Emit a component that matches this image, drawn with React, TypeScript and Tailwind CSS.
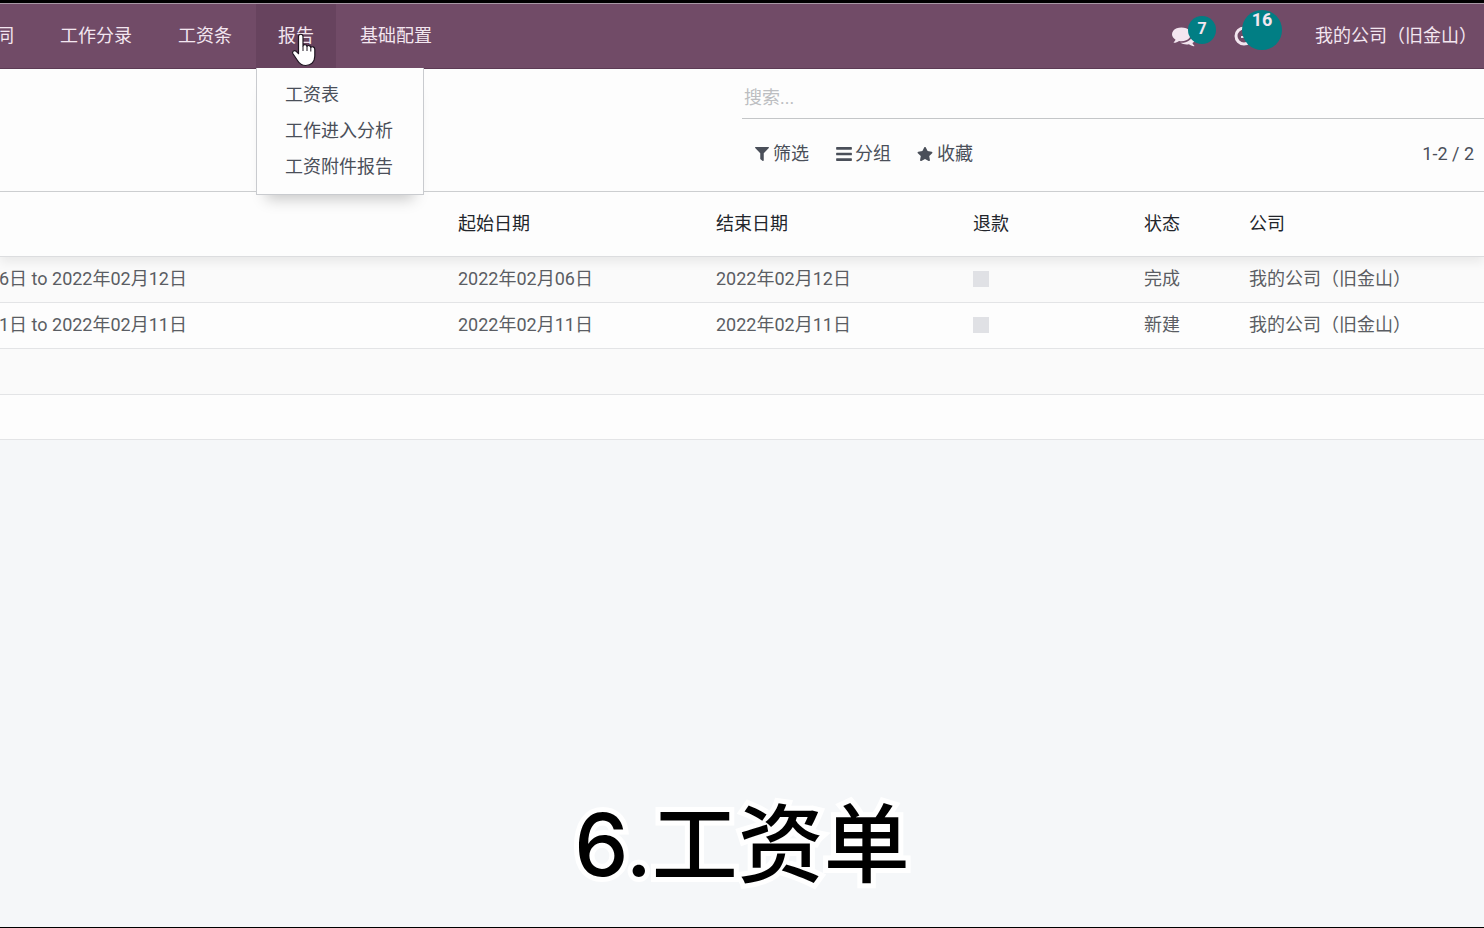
import { FaBars, FaFilter, FaStar } from "react-icons/fa"

const reports = ["工资表", "工作进入分析", "工资附件报告"]

const payslips = [
  {
    name: "6日 to 2022年02月12日",
    start: "2022年02月06日",
    end: "2022年02月12日",
    state: "完成",
    company: "我的公司（旧金山）",
  },
  {
    name: "1日 to 2022年02月11日",
    start: "2022年02月11日",
    end: "2022年02月11日",
    state: "新建",
    company: "我的公司（旧金山）",
  },
]

function CommentsIcon() {
  return (
    <svg viewBox="0 0 1792 1792" className="h-6 w-6 fill-[#f3e6f0]" aria-hidden="true">
      <path d="M1408 768q0 139-94 257t-256.5 186.5-353.5 68.5q-86 0-176-16-124 88-278 128-36 9-86 16h-3q-11 0-20.5-8t-11.5-21q-1-3-1-6.5t.5-6.5 2-6l2.5-5 3.5-5.5 4-5 4.5-5 4-4.5q5-6 23-25t26-29.5 22.5-29 25-38.5 20.5-44q-124-72-195-177t-71-224q0-139 94-257t256.5-186.5 353.5-68.5 353.5 68.5 256.5 186.5 94 257zm384 256q0 120-71 224.5t-195 176.5q10 24 20.5 44t25 38.5 22.5 29 26 29.5 23 25q1 1 4 4.5t4.5 5 4 5 3.5 5.5l2.5 5 2 6 .5 6.5-1 6.5q-3 14-13 22t-22 7q-50-7-86-16-154-40-278-128-90 16-176 16-271 0-472-132 58 4 88 4 161 0 309-45t264-129q125-92 192-212t67-254q0-77-23-152 129 71 204 178t75 230z" />
    </svg>
  )
}

function ClockIcon() {
  return (
    <svg viewBox="0 0 20 20" className="h-5 w-5 fill-none stroke-[#f3e6f0]" aria-hidden="true">
      <circle cx="10" cy="10" r="8" strokeWidth="3" />
      <path d="M10.500 5v6H7" strokeWidth="2" />
    </svg>
  )
}

function HandCursor() {
  return (
    <svg
      viewBox="0 0 26 34"
      className="pointer-events-none absolute left-[35px] top-[29px] h-[34px] w-[26px]"
      aria-hidden="true"
    >
      <path
        d="M7.500 3.500c0-3 4.500-3 4.500 0V13c.4-1.900 3.600-1.900 4 .4.800-1.500 3.600-1 3.800 1 1-1.200 4-.7 4 2V23c0 5.500-3.500 9.500-9 9.500-4.300 0-6.600-2-8.300-5L1.800 20.500c-1-2.300 1.600-3.900 3.400-2.200l2.300 2.400z"
        fill="#fff"
        stroke="#1d1420"
        strokeWidth="1.200"
        strokeLinejoin="round"
      />
      <path d="M12 13v5M16 13.500v4.500M19.800 14.500v4" stroke="#1d1420" strokeWidth="1" />
    </svg>
  )
}

function Navbar() {
  const item = "flex h-full items-center px-[22px]"

  return (
    <header className="flex h-[66px] items-stretch justify-between border-b border-t border-b-[#5c3a54] border-t-[#a898a5] bg-[#714b67] text-[#f3e6f0]">
      <nav className="-ml-[26px] flex gap-0.5">
        <a href="#" className={item}>同</a>
        <a href="#" className={item}>工作分录</a>
        <a href="#" className={item}>工资条</a>
        <div className="relative bg-[#67435e]">
          <button type="button" aria-expanded="true" className={item}>
            报告
          </button>
          <div className="absolute left-0 top-full z-10 w-[168px] border border-t-0 border-[#c9cbcf] bg-[#fdfdfd] py-[9px] text-[#4a4f59] shadow-[0_14px_14px_-10px_rgba(0,0,0,0.22)]">
            {reports.map((label) => (
              <a key={label} href="#" className="block h-9 pl-7 leading-9">
                {label}
              </a>
            ))}
          </div>
          <HandCursor />
        </div>
        <a href="#" className={item}>基础配置</a>
      </nav>
      <div className="flex items-center pr-[7px]">
        <button type="button" aria-label="消息" className="relative mr-[38px]">
          <CommentsIcon />
          <span className="absolute -top-2 left-4 flex h-7 w-7 items-center justify-center rounded-full bg-[#017e84] pb-0.5 text-base font-bold">
            7
          </span>
        </button>
        <button type="button" aria-label="活动" className="relative mr-[61px]">
          <ClockIcon />
          <span className="absolute -top-4 left-2 flex h-10 w-10 justify-center rounded-full bg-[#017e84] text-lg font-bold leading-5">
            16
          </span>
        </button>
        <button type="button">我的公司（旧金山）</button>
      </div>
    </header>
  )
}

function ControlPanel() {
  return (
    <section className="flex h-[123px] justify-end border-b border-[#cdcfd1] bg-[#fdfdfd] text-[#4a4f59]">
      <div className="w-1/2">
        <input
          type="search"
          aria-label="搜索"
          placeholder="搜索..."
          className="block h-[50px] w-full border-b border-[#c4c6c8] pb-0 pl-0.5 pt-2 outline-none placeholder:text-[#bcbec1]"
        />
        <div className="flex h-[70px] items-center justify-between pl-[13px] pr-2.5">
          <div className="flex gap-[26px]">
            <button type="button" className="flex items-center gap-1">
              <FaFilter className="h-3.5 w-3.5" />
              筛选
            </button>
            <button type="button" className="flex items-center gap-0.5">
              <FaBars className="h-[18px] w-[18px]" />
              分组
            </button>
            <button type="button" className="flex items-center gap-1">
              <FaStar className="h-4 w-4" />
              收藏
            </button>
          </div>
          <span>1-2 / 2</span>
        </div>
      </div>
    </section>
  )
}

function PayslipTable() {
  return (
    <table className="w-full table-fixed border-collapse bg-[#fdfdfd] text-left text-[#5a5d63]">
      <colgroup>
        <col />
        <col className="w-[258px]" />
        <col className="w-[257px]" />
        <col className="w-[171px]" />
        <col className="w-[105px]" />
        <col className="w-[235px]" />
      </colgroup>
      <thead>
        <tr className="h-16 border-b border-[#dcdddf] text-[#22252b] shadow-[0_6px_10px_rgba(0,0,0,0.07)]">
          <th></th>
          <th className="font-normal">起始日期</th>
          <th className="font-normal">结束日期</th>
          <th className="font-normal">退款</th>
          <th className="font-normal">状态</th>
          <th className="font-normal">公司</th>
        </tr>
      </thead>
      <tbody>
        {payslips.map((slip) => (
          <tr key={slip.name} className="h-[46px] border-b border-[#e3e4e6] odd:bg-black/1">
            <td>
              <span className="-ml-px">{slip.name}</span>
            </td>
            <td>{slip.start}</td>
            <td>{slip.end}</td>
            <td>
              <input
                type="checkbox"
                disabled
                aria-label="退款"
                className="block h-4 w-4 appearance-none bg-[#e0e1e5]"
              />
            </td>
            <td>{slip.state}</td>
            <td>{slip.company}</td>
          </tr>
        ))}
        <tr className="h-[46px] border-b border-[#e3e4e6] bg-black/1">
          <td colSpan={6}></td>
        </tr>
        <tr className="h-[45px] border-b border-[#e3e4e6]">
          <td colSpan={6}></td>
        </tr>
      </tbody>
    </table>
  )
}

export default function App() {
  return (
    <div className="flex min-h-screen flex-col overflow-x-hidden border-b border-t-[3px] border-black bg-[#f5f7f9] font-['Roboto','Noto_Sans_CJK_SC',sans-serif] text-lg leading-6">
      <Navbar />
      <ControlPanel />
      <main className="flex grow flex-col justify-between">
        <PayslipTable />
        <p className="pb-8 text-center font-['Inter','Noto_Sans_CJK_SC',sans-serif] text-[86px] font-medium leading-[100px] text-black [-webkit-text-stroke:10px_white] [paint-order:stroke_fill]">
          6.工资单
        </p>
      </main>
    </div>
  )
}
